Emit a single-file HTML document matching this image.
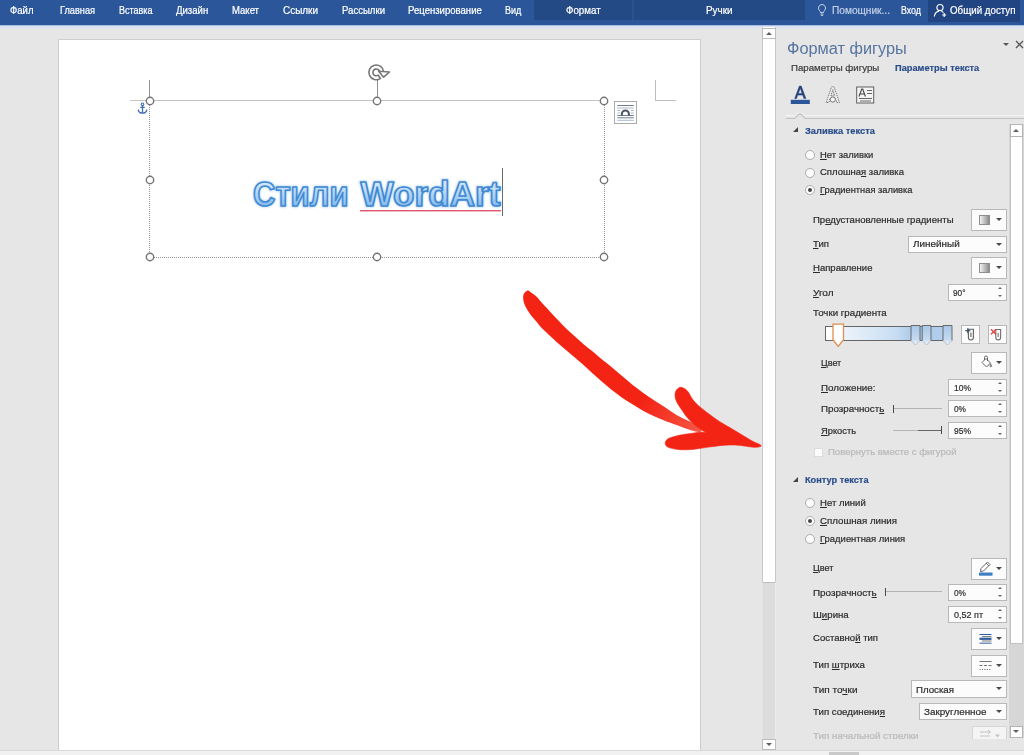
<!DOCTYPE html>
<html lang="ru">
<head>
<meta charset="utf-8">
<title>Формат фигуры</title>
<style>
*{box-sizing:border-box;margin:0;padding:0}
html,body{width:1024px;height:755px;overflow:hidden;background:#e6e6e6}
body{position:relative;font-family:"Liberation Sans",sans-serif;font-size:10.5px;color:#3a3a3a}
div,svg{position:absolute}
.t{white-space:nowrap;line-height:normal;transform-origin:0 0;color:#2b2b2b;-webkit-text-stroke:.2px currentColor}
.t u{text-decoration:underline;text-underline-offset:1px;text-decoration-thickness:1px}
#ribbon{left:0;top:0;width:1024px;height:25px;background:#2b579a}
.dark{top:0;height:20px;background:#244a86}
#page{left:58px;top:39px;width:643px;height:711px;background:#fff;border:1px solid #cdcdcd;border-bottom:none}
.h{width:10px;height:10px;border:1.5px solid #7a7a7a;border-radius:50%;background:#fff}
.btn{left:971px;width:36px;height:22px;background:#fcfcfc;border:1px solid #b8b8b8}
.btn:after,.dd:after{content:"";position:absolute;right:4px;top:8px;border-left:3px solid transparent;border-right:3px solid transparent;border-top:3px solid #4a4a4a}
.dd{height:17px;background:#fcfcfc;border:1px solid #b8b8b8}
.dd:after{top:6px}
.sp{left:948px;width:59px;height:17px;background:#fcfcfc;border:1px solid #b8b8b8}
.sp:before{content:"";position:absolute;right:4px;top:2px;border-left:2px solid transparent;border-right:2px solid transparent;border-bottom:2.5px solid #666}
.sp:after{content:"";position:absolute;right:4px;top:10px;border-left:2px solid transparent;border-right:2px solid transparent;border-top:2.5px solid #666}
.rd{left:805px;width:10px;height:10px;border:1px solid #adadad;border-radius:50%;background:#fdfdfd}
.rd.on:after{content:"";position:absolute;left:2px;top:2px;width:4px;height:4px;border-radius:50%;background:#444}
.tri{left:793px;width:0;height:0;border-left:5.5px solid transparent;border-bottom:5.5px solid #444}
.sl{height:1px;background:#b4b4b4}
.th{width:1px;height:8px;background:#4a4a4a}
</style>
</head>
<body>
<!-- ribbon -->
<div id="ribbon"></div>
<div class="dark" style="left:534px;width:98px"></div>
<div class="dark" style="left:632px;width:2px;background:#2a528f"></div>
<div class="dark" style="left:634px;width:171px"></div>
<div class="dark" style="left:928px;width:92px;height:22px;background:#214482"></div>
<div style="left:0;top:25px;width:1024px;height:7px;background:linear-gradient(#7f9ac4 0,#d6e1f2 14%,#dde6f3 40%,#e4e5e8 60%,#e6e6e6 100%)"></div>
<svg style="left:816px;top:3px" width="12" height="14" viewBox="0 0 12 14"><path d="M6 1.5a3.6 3.6 0 0 0-2.2 6.4c.5.5.7 1 .7 1.700h3c0-.7.2-1.200.7-1.700A3.600 3.600 0 0 0 6 1.500zM4.600 11h2.800M4.900 12.400h2.200" fill="none" stroke="#c3d0e6" stroke-width="1"/></svg>
<svg style="left:933px;top:3px" width="15" height="15" viewBox="0 0 15 15"><circle cx="7" cy="4.600" r="3.100" fill="none" stroke="#fff" stroke-width="1.200"/><path d="M1.300 13.500c.4-3 2.400-4.800 4.700-5.300M8.500 8.300c.8.300 1.500.8 2 1.400M11.200 10v4M9.200 12h4" fill="none" stroke="#fff" stroke-width="1.200"/></svg>

<!-- document -->
<div id="page"></div>
<div style="left:130px;top:99.500px;width:16px;height:1.500px;background:#c6c6c6"></div>
<div style="left:149px;top:80px;width:1px;height:20px;background:#929292"></div>
<div style="left:655px;top:80px;width:1px;height:21px;background:#bdbdbd"></div>
<div style="left:655px;top:100px;width:21px;height:1px;background:#bdbdbd"></div>
<div style="left:149px;top:100px;width:456px;height:158px;border:1px dotted #959595;border-top:1px solid #c4c4c4"></div>
<div style="left:376.500px;top:80px;width:1px;height:17px;background:#8c8c8c"></div>
<svg style="left:143.5px;top:94.7px" width="12" height="12" viewBox="0 0 12 12"><circle cx="6" cy="6" r="3.700" fill="#fff" stroke="#747474" stroke-width="1.400"/></svg><svg style="left:371.0px;top:94.7px" width="12" height="12" viewBox="0 0 12 12"><circle cx="6" cy="6" r="3.700" fill="#fff" stroke="#747474" stroke-width="1.400"/></svg><svg style="left:598.0px;top:94.7px" width="12" height="12" viewBox="0 0 12 12"><circle cx="6" cy="6" r="3.700" fill="#fff" stroke="#747474" stroke-width="1.400"/></svg><svg style="left:143.5px;top:173.5px" width="12" height="12" viewBox="0 0 12 12"><circle cx="6" cy="6" r="3.700" fill="#fff" stroke="#747474" stroke-width="1.400"/></svg><svg style="left:598.0px;top:173.5px" width="12" height="12" viewBox="0 0 12 12"><circle cx="6" cy="6" r="3.700" fill="#fff" stroke="#747474" stroke-width="1.400"/></svg><svg style="left:143.5px;top:251.0px" width="12" height="12" viewBox="0 0 12 12"><circle cx="6" cy="6" r="3.700" fill="#fff" stroke="#747474" stroke-width="1.400"/></svg><svg style="left:371.0px;top:251.0px" width="12" height="12" viewBox="0 0 12 12"><circle cx="6" cy="6" r="3.700" fill="#fff" stroke="#747474" stroke-width="1.400"/></svg><svg style="left:598.0px;top:251.0px" width="12" height="12" viewBox="0 0 12 12"><circle cx="6" cy="6" r="3.700" fill="#fff" stroke="#747474" stroke-width="1.400"/></svg>
<!-- rotate -->
<svg style="left:366px;top:62px" width="26" height="20" viewBox="0 0 26 20"><path d="M14.49 16.46A7.4 7.4 0 1 1 17.65 9.90L13.65 9.90A3.4 3.4 0 1 0 12.20 13.19z" fill="#fff" stroke="#777" stroke-width="1.6" stroke-linejoin="round"/><path d="M12.65 9.20L23.45 10.00L17.65 15.20z" fill="#fff" stroke="#777" stroke-width="1.6" stroke-linejoin="round"/></svg>
<!-- anchor -->
<svg style="left:136.500px;top:101.700px" width="11" height="12.500" viewBox="0 0 12 14"><circle cx="6" cy="2.600" r="1.500" fill="none" stroke="#3f6fb5" stroke-width="1.200"/><path d="M6 4v8M3.500 6h5M1.200 8.500c.3 2.600 2.300 4 4.800 4s4.500-1.400 4.800-4" fill="none" stroke="#3f6fb5" stroke-width="1.500"/></svg>
<!-- layout options -->
<div style="left:614px;top:101px;width:23px;height:23px;background:#fff;border:1px solid #ababab"></div>
<svg style="left:614px;top:101px" width="23" height="23" viewBox="0 0 23 23"><path d="M3.300 4.500h16.500M3.300 14.500h16.500M3.300 16.800h16.500" stroke="#6f7f95" stroke-width="1" fill="none"/><path d="M3.300 7h16.500M3.300 9.500h3M16.800 9.500h3M3.300 12h3M16.800 12h3M3.300 19.300h16.500" stroke="#a9b9cf" stroke-width="1" fill="none"/><path d="M7.900 14.500v-1.600a3.500 3.500 0 0 1 7 0v1.600" fill="none" stroke="#4d5560" stroke-width="2"/></svg>
<!-- wordart -->
<svg style="left:240px;top:160px" width="280" height="66" viewBox="0 0 280 66">
<defs><linearGradient id="wa" x1="0" y1="0" x2="0" y2="1"><stop offset="0.25" stop-color="#cfe6fb"/><stop offset="0.6" stop-color="#a3cdf3"/><stop offset="0.85" stop-color="#7ab3e8"/></linearGradient>
<filter id="wb" x="-5%" y="-20%" width="110%" height="140%"><feGaussianBlur stdDeviation="1.2"/></filter></defs>
<g font-family="Liberation Sans, sans-serif" font-weight="bold" font-size="35.5">
<g filter="url(#wb)" fill="#8ec0ee" stroke="#8ec0ee" stroke-width="2.5" opacity=".7"><text x="13" y="46.400" textLength="95.500" lengthAdjust="spacingAndGlyphs">Стили</text><text x="120.500" y="46.400" textLength="140" lengthAdjust="spacingAndGlyphs">WordArt</text></g>
<g fill="url(#wa)" stroke="#4189d3" stroke-width="1.700" stroke-linejoin="round"><text x="13" y="46.400" textLength="95.500" lengthAdjust="spacingAndGlyphs">Стили</text><text x="120.500" y="46.400" textLength="140" lengthAdjust="spacingAndGlyphs">WordArt</text></g>
</g></svg>
<div style="left:360px;top:210px;width:141px;height:1px;background:#e0566e"></div><div style="left:360px;top:211px;width:141px;height:1px;background:#f3b9c3"></div>
<div style="left:502px;top:168px;width:1px;height:48px;background:#6a6a6a"></div>
<!-- arrow -->
<svg style="left:0;top:0" width="1024" height="755" viewBox="0 0 1024 755"><defs><linearGradient id="ag" gradientUnits="userSpaceOnUse" x1="645" y1="400" x2="700" y2="430"><stop offset="0" stop-color="#f42415"/><stop offset="1" stop-color="#f65746"/></linearGradient></defs><g stroke-width="0.6" stroke-linejoin="round"><path d="M528.0 290.5C529.2 290.3 529.7 291.6 531.0 292.5C532.3 293.4 534.2 294.4 535.9 296.0C537.6 297.6 539.4 300.0 541.2 302.0C543.0 304.0 544.7 305.9 546.5 307.8C548.3 309.7 549.1 310.8 551.8 313.6C554.4 316.4 558.9 321.2 562.4 324.7C565.9 328.2 569.5 331.5 573.0 334.8C576.5 338.1 580.1 341.3 583.6 344.3C587.1 347.3 591.4 350.5 594.2 352.8C597.0 355.1 597.8 355.9 600.6 358.2C603.4 360.5 607.7 363.8 611.2 366.7C614.7 369.6 618.3 372.7 621.8 375.7C625.3 378.7 628.9 381.9 632.4 384.7C635.9 387.5 639.5 390.1 643.0 392.7C646.5 395.3 650.1 397.8 653.6 400.1C657.1 402.5 660.4 404.3 664.2 406.8C668.0 409.3 672.7 412.6 676.5 414.9C680.3 417.1 683.3 418.3 687.2 420.3C691.1 422.3 697.9 425.1 700.0 427.0C702.1 428.9 702.1 431.7 700.0 432.0C697.9 432.3 691.1 430.0 687.2 428.9C683.3 427.8 680.3 426.5 676.5 425.1C672.7 423.7 668.0 422.0 664.2 420.5C660.4 419.0 657.1 417.6 653.6 416.0C650.1 414.4 646.5 412.6 643.0 410.7C639.5 408.8 635.9 406.5 632.4 404.3C628.9 402.1 625.3 399.9 621.8 397.4C618.3 394.9 614.7 392.3 611.2 389.5C607.7 386.7 604.1 383.6 600.6 380.5C597.1 377.4 592.8 373.6 590.0 371.0C587.2 368.4 586.4 367.5 583.6 365.0C580.8 362.5 576.5 359.0 573.0 356.0C569.5 353.0 565.9 350.1 562.4 347.0C558.9 343.9 555.3 340.7 551.8 337.4C548.3 334.1 543.9 330.1 541.2 327.4C538.6 324.7 537.7 323.1 535.9 321.0C534.1 318.9 532.4 317.2 530.6 314.7C528.8 312.2 526.5 308.8 525.3 306.2C524.1 303.6 523.4 300.9 523.2 298.8C523.0 296.7 523.2 294.9 524.0 293.5C524.8 292.1 526.8 290.7 528.0 290.5z" fill="url(#ag)" stroke="none"/><path d="M680.8 387.3C682.6 387.4 685.2 388.7 687.2 390.7C689.2 392.7 690.8 396.9 692.6 399.3C694.4 401.7 695.3 402.8 698.0 405.2C700.7 407.6 705.1 411.1 708.7 413.8C712.3 416.5 715.8 419.1 719.4 421.4C723.0 423.7 726.6 425.7 730.2 427.8C733.8 429.9 737.3 432.1 740.9 434.2C744.5 436.3 748.4 438.8 751.7 440.7C755.0 442.6 761.6 444.9 760.5 445.3C759.4 445.7 750.9 444.2 745.0 443.0C739.1 441.8 731.4 439.7 725.0 438.0C718.6 436.3 711.1 434.4 706.6 432.6C702.1 430.8 700.3 428.9 698.0 427.3C695.7 425.7 694.4 424.6 692.6 423.0C690.8 421.4 689.0 419.8 687.2 417.6C685.4 415.5 683.7 412.8 681.9 410.1C680.1 407.4 677.6 404.0 676.5 401.5C675.4 399.0 675.0 396.9 675.0 395.0C675.0 393.1 675.5 391.3 676.5 390.0C677.5 388.7 679.0 387.2 680.8 387.3z" fill="#f42415" stroke="#f42415"/><path d="M665.2 443.4C665.1 442.1 666.0 440.5 667.0 439.5C668.0 438.5 668.6 438.3 671.1 437.5C673.6 436.7 678.3 435.5 681.9 434.8C685.5 434.1 689.0 433.6 692.6 433.2C696.2 432.8 697.9 432.0 703.3 432.3C708.7 432.6 718.0 433.6 725.0 435.0C732.0 436.4 739.1 439.3 745.0 441.0C750.9 442.7 758.3 444.3 760.5 445.3C762.7 446.3 759.6 446.8 758.1 447.1C756.6 447.4 754.6 447.4 751.7 447.1C748.8 446.8 744.5 445.9 740.9 445.5C737.3 445.1 733.8 445.0 730.2 445.0C726.6 445.0 723.0 445.3 719.4 445.7C715.8 446.1 712.3 446.6 708.7 447.1C705.1 447.6 701.6 448.2 698.0 448.7C694.4 449.1 690.8 449.7 687.2 449.8C683.6 449.9 679.7 449.8 676.5 449.3C673.3 448.9 669.8 448.1 667.9 447.1C666.0 446.1 665.4 444.7 665.2 443.4z" fill="#f42415" stroke="#f42415"/></g></svg>

<!-- doc scrollbar -->
<div style="left:762px;top:27px;width:14px;height:723px;background:#fff;border-left:1px solid #c8c8c8;border-right:1px solid #c8c8c8"></div>
<div style="left:762px;top:28px;width:14px;height:11px;border:1px solid #bcbcbc;background:#fff"></div>
<div style="left:766px;top:32px;width:0;height:0;border-left:3px solid transparent;border-right:3px solid transparent;border-bottom:3px solid #606060"></div>
<div style="left:762px;top:582px;width:14px;height:158px;background:#dcdcdc;border-left:1px solid #e4e4e4;border-right:1px solid #ececec;border-top:1px solid #bdbdbd"></div>
<div style="left:762px;top:739px;width:14px;height:11px;border:1px solid #bcbcbc;background:#fff"></div>
<div style="left:766px;top:743px;width:0;height:0;border-left:3px solid transparent;border-right:3px solid transparent;border-top:3px solid #606060"></div>

<!-- pane chrome -->
<div style="left:1003px;top:43px;width:0;height:0;border-left:3.500px solid transparent;border-right:3.500px solid transparent;border-top:3.500px solid #555"></div>
<svg style="left:1014px;top:39px" width="10" height="10" viewBox="0 0 10 10"><path d="M2 2l7 7M9 2l-7 7" stroke="#555" stroke-width="1.300" fill="none"/></svg>
<!-- tab icons -->
<svg style="left:789px;top:84px" width="22" height="22" viewBox="0 0 22 22"><path d="M5.700 14.500L10.400 2h1.800l4.700 12.500h-2l-1.200-3.400H8.700L7.500 14.500zM9.300 9.400h3.800L11.300 4.200z" fill="#22407c" stroke="#22407c" stroke-width=".5"/><rect x="1.800" y="15.800" width="19" height="4.200" fill="#2b579a"/></svg>
<svg style="left:823px;top:84px" width="20" height="22" viewBox="0 0 20 22"><path d="M3.200 18.500L8.600 2.800h2.400l5.400 15.700h-2.600l-1.300-4.200H7.100l-1.300 4.200zM7.900 11.800h3.800L9.800 5.600z" fill="#f4f4f4" stroke="#777" stroke-width="1" stroke-dasharray="1.500 .8"/><circle cx="9.800" cy="15.500" r="2.600" fill="#f4f4f4" stroke="#777" stroke-width="1"/></svg>
<svg style="left:855px;top:85px" width="20" height="20" viewBox="0 0 20 20"><rect x="1.700" y="2" width="17" height="16" fill="#f4f4f4" stroke="#5e5e5e" stroke-width="1"/><path d="M4 11.500l2.700-7.500h1l2.700 7.500M5 9h4.500" fill="none" stroke="#444" stroke-width="1.100"/><path d="M12 5.500h5M12 8.500h5M4 13.500h13M5 16h11" stroke="#666" stroke-width="1" fill="none"/></svg>
<!-- separator with notch -->
<svg style="left:786px;top:110px" width="238" height="10" viewBox="0 0 238 10"><path d="M0 5.500h9.500l4.500-4 4.500 4H238" fill="none" stroke="#f3f3f3" stroke-width="1"/><path d="M0 8.500h8.500l5.500-5 5.500 5H238" fill="none" stroke="#c2c2c2" stroke-width="1.200"/></svg>

<!-- section 1 -->
<div class="tri" style="top:127px"></div>
<div class="rd" style="top:150px"></div><div class="rd" style="top:167.500px"></div><div class="rd on" style="top:185px"></div>
<div class="btn" style="top:209px"></div>
<div style="left:979px;top:214.500px;width:11px;height:10px;border:1px solid #8f8f8f;background:linear-gradient(90deg,#f4f4f4,#8d8d8d)"></div>
<div class="dd" style="left:908px;top:236px;width:99px"></div>
<div class="btn" style="top:257px"></div>
<div style="left:979px;top:262.500px;width:11px;height:10px;border:1px solid #8f8f8f;background:linear-gradient(90deg,#f4f4f4,#8d8d8d)"></div>
<div class="sp" style="top:284px"></div>
<!-- gradient bar -->
<div style="left:825px;top:326px;width:127px;height:15px;border:1px solid #666;background:linear-gradient(90deg,#fff 0,#fff 7%,#eef4fb 12%,#c9def3 55%,#a9c9ea 70%,#b4d0ed 100%)"></div>
<svg style="left:828px;top:321px" width="128" height="30" viewBox="0 0 128 30"><path d="M5 3.200h10.500v15.500L10.200 25.500 5 18.700z" fill="#fff" stroke="#e08e55" stroke-width="1.300"/><path d="M83 4.500h9v15l-4.500 4.500-4.500-4.500z" fill="url(#gs)" stroke="none"/><path d="M94.200 4.500h8.800v15l-4.400 4.500-4.400-4.500z" fill="url(#gs)"/><path d="M115 4.500h9v15l-4.500 4.500-4.500-4.500z" fill="url(#gs)"/><path d="M83 19.500l4.500 4.500 4.500-4.500M94.200 19.500l4.400 4.500 4.400-4.500M115 19.500l4.500 4.500 4.500-4.500" fill="none" stroke="#aab4c0" stroke-width=".8"/><path d="M83 19.500V4.500h9v15M94.200 19.500V4.500h8.800v15M115 19.500V4.500h9v15" fill="none" stroke="#5e5e5e" stroke-width=".9"/><defs><linearGradient id="gs" x1="0" y1="0" x2="0" y2="1"><stop offset="0" stop-color="#a9c7e8"/><stop offset=".7" stop-color="#c4d9ef"/><stop offset="1" stop-color="#f4f8fc"/></linearGradient></defs></svg>
<div style="left:961px;top:325px;width:19px;height:19px;background:#fcfcfc;border:1px solid #b8b8b8"></div>
<div style="left:988px;top:325px;width:19px;height:19px;background:#fcfcfc;border:1px solid #b8b8b8"></div>
<svg style="left:962px;top:325px" width="18" height="19" viewBox="0 0 18 19"><path d="M6.400 4.200h5v8.300a2.500 2.500 0 0 1-5 0z" fill="#fafafa" stroke="#5f5f5f" stroke-width="1.100"/><path d="M8.900 7.500v4.500" stroke="#7a7a7a" stroke-width="1.300"/><path d="M5.800 3.200v5M3.300 5.700h5" stroke="#44546a" stroke-width="1.300"/></svg>
<svg style="left:988px;top:325px" width="19" height="19" viewBox="0 0 19 19"><path d="M7.800 4.500h4.800v8a2.400 2.400 0 0 1-4.800 0z" fill="#fafafa" stroke="#6f6f6f" stroke-width="1.100"/><path d="M10.200 8v4" stroke="#8a8a8a" stroke-width="1.300"/><path d="M3 4.300l5 5M8 4.300l-5 5" stroke="#e0443a" stroke-width="1.400"/></svg>
<div class="btn" style="top:352px"></div>
<svg style="left:977px;top:354px" width="18" height="17" viewBox="0 0 18 17"><path d="M5 8.500l4-4 4.500 4.500-4 4z" fill="#fff" stroke="#666" stroke-width="1"/><path d="M7.500 6V3.500a1.500 1.500 0 0 1 3 0V7" fill="none" stroke="#666" stroke-width="1"/><path d="M13.500 9c1 1.400 1.500 2.300 1.500 3a1.200 1.200 0 0 1-2.400 0c0-.7.400-1.600.9-3z" fill="#888"/></svg>
<div class="sp" style="top:379px"></div>
<div class="sl" style="left:893px;top:408px;width:49px"></div><div class="th" style="left:893px;top:404.500px"></div>
<div class="sp" style="top:400px"></div>
<div class="sl" style="left:893px;top:430px;width:49px"></div><div class="sl" style="left:918px;top:430px;width:23px;background:#666"></div><div class="th" style="left:940.500px;top:426px"></div>
<div class="sp" style="top:422px"></div>
<div style="left:814px;top:447.500px;width:9px;height:9px;background:#fbfbfb;border:1px solid #dcdcdc"></div>

<!-- section 2 -->
<div class="tri" style="top:476.500px"></div>
<div class="rd" style="top:498px"></div><div class="rd on" style="top:515.500px"></div><div class="rd" style="top:533.500px"></div>
<div class="btn" style="top:558px"></div>
<svg style="left:977px;top:557.500px" width="18" height="20" viewBox="0 0 18 20"><path d="M4 10.500l6.500-6.500 2.500 2.500-6.500 6.500-3 .5z" fill="#fff" stroke="#666" stroke-width="1"/><path d="M9 5l3 3" stroke="#666" stroke-width="1"/><rect x="2" y="14.500" width="13.500" height="3.200" fill="#3f7fc4"/></svg>
<div class="sl" style="left:885px;top:591px;width:57px"></div><div class="th" style="left:884.500px;top:587.500px"></div>
<div class="sp" style="top:584px"></div>
<div class="sp" style="top:606px"></div>
<div class="btn" style="top:628px"></div>
<svg style="left:978px;top:632px" width="16" height="14" viewBox="0 0 16 14"><path d="M1.500 2.500h12" stroke="#2e5f9e" stroke-width="1"/><path d="M1.500 6.800h12" stroke="#2e5f9e" stroke-width="2.200"/><path d="M1.500 11.200h12" stroke="#2e5f9e" stroke-width="1"/><path d="M4 4.600h9.500M4 9h9.500" stroke="#555" stroke-width=".8"/></svg>
<div class="btn" style="top:655px"></div>
<svg style="left:978px;top:659px" width="16" height="14" viewBox="0 0 16 14"><path d="M1.500 2.500h12" stroke="#777" stroke-width="1"/><path d="M1.500 6.500h12" stroke="#777" stroke-width="1" stroke-dasharray="3 1.500"/><path d="M1.500 10.500h12" stroke="#777" stroke-width="1" stroke-dasharray="1.200 1.200"/></svg>
<div class="dd" style="left:911px;top:680px;width:96px;height:18px"></div>
<div class="dd" style="left:919px;top:703px;width:88px"></div>
<div style="left:972px;top:726px;width:35px;height:13px;background:#f4f4f4;border:1px solid #d6d6d6;border-bottom:none"></div>
<svg style="left:978px;top:728px" width="26" height="11" viewBox="0 0 26 11"><path d="M2 4h10M2 8h10M10 2l2.500 2L10 6" stroke="#c4c4c4" stroke-width="1" fill="none"/><path d="M17 6.500l2.500 3 2.500-3z" fill="#c4c4c4"/></svg>

<!-- pane scrollbar -->
<div style="left:1009px;top:124px;width:15px;height:614px;background:#d6d6d6"></div>
<div style="left:1010px;top:124px;width:12.500px;height:520px;background:#fff;border:1px solid #c2c2c2"></div>
<div style="left:1010px;top:124px;width:12.500px;height:12.500px;background:#fff;border:1px solid #b4b4b4"></div>
<div style="left:1013px;top:128.500px;width:0;height:0;border-left:3px solid transparent;border-right:3px solid transparent;border-bottom:3px solid #606060"></div>
<div style="left:1010px;top:725.500px;width:12.500px;height:12px;background:#fff;border:1px solid #b4b4b4"></div>
<div style="left:1013px;top:730px;width:0;height:0;border-left:3px solid transparent;border-right:3px solid transparent;border-top:3px solid #606060"></div>

<div class="t" style="left:9.50px;top:5.0px;font-size:10px;transform:scaleX(0.9555);color:#fff">Файл</div>
<div class="t" style="left:59.50px;top:5.0px;font-size:10px;transform:scaleX(0.9195);color:#fff">Главная</div>
<div class="t" style="left:118.50px;top:5.0px;font-size:10px;transform:scaleX(0.9012);color:#fff">Вставка</div>
<div class="t" style="left:175.70px;top:5.0px;font-size:10px;transform:scaleX(0.9606);color:#fff">Дизайн</div>
<div class="t" style="left:232.00px;top:5.0px;font-size:10px;transform:scaleX(0.9536);color:#fff">Макет</div>
<div class="t" style="left:282.75px;top:5.0px;font-size:10px;transform:scaleX(0.9938);color:#fff">Ссылки</div>
<div class="t" style="left:341.50px;top:5.0px;font-size:10px;transform:scaleX(0.9579);color:#fff">Рассылки</div>
<div class="t" style="left:408.20px;top:5.0px;font-size:10px;transform:scaleX(0.9557);color:#fff">Рецензирование</div>
<div class="t" style="left:505.20px;top:5.0px;font-size:10px;transform:scaleX(0.9009);color:#fff">Вид</div>
<div class="t" style="left:565.50px;top:5.0px;font-size:10px;transform:scaleX(0.9766);color:#fff">Формат</div>
<div class="t" style="left:705.50px;top:5.0px;font-size:10px;transform:scaleX(0.9872);color:#fff">Ручки</div>
<div class="t" style="left:900.60px;top:5.0px;font-size:10px;transform:scaleX(0.8796);color:#fff">Вход</div>
<div class="t" style="left:950.00px;top:5.0px;font-size:10px;transform:scaleX(0.9749);color:#fff">Общий доступ</div>
<div class="t" style="left:831.70px;top:5.0px;font-size:10px;transform:scaleX(1.0134);color:#c3d0e6">Помощник...</div>
<div class="t" style="left:786.75px;top:39.5px;font-size:16px;transform:scaleX(1.0197);color:#58759f;-webkit-text-stroke:0">Формат фигуры</div>
<div class="t" style="left:791.00px;top:62.0px;font-size:9.5px;transform:scaleX(1.0188);color:#3a3a3a">Параметры фигуры</div>
<div class="t" style="left:895.00px;top:62.0px;font-size:9.5px;transform:scaleX(0.9752);color:#2b4f8c;font-weight:bold">Параметры текста</div>
<div class="t" style="left:805.00px;top:125.0px;font-size:9.5px;transform:scaleX(0.9801);color:#2b4f8c;font-weight:bold">Заливка текста</div>
<div class="t" style="left:819.75px;top:148.5px;font-size:9.5px;transform:scaleX(0.9890);"><u>Н</u>ет заливки</div>
<div class="t" style="left:819.75px;top:166.0px;font-size:9.5px;transform:scaleX(0.9991);">Сплошна<u>я</u> заливка</div>
<div class="t" style="left:819.75px;top:184.0px;font-size:9.5px;transform:scaleX(0.9796);"><u>Г</u>радиентная заливка</div>
<div class="t" style="left:813.00px;top:214.0px;font-size:9.5px;transform:scaleX(1.0058);">Пр<u>е</u>дустановленные градиенты</div>
<div class="t" style="left:813.00px;top:238.0px;font-size:9.5px;transform:scaleX(1.0099);"><u>Т</u>ип</div>
<div class="t" style="left:912.50px;top:238.0px;font-size:9.5px;transform:scaleX(1.0443);">Линейный</div>
<div class="t" style="left:813.00px;top:262.0px;font-size:9.5px;transform:scaleX(1.0021);"><u>Н</u>аправление</div>
<div class="t" style="left:813.00px;top:287.0px;font-size:9.5px;transform:scaleX(1.0521);"><u>У</u>гол</div>
<div class="t" style="left:953.00px;top:286.5px;font-size:9.5px;transform:scaleX(0.8696);">90°</div>
<div class="t" style="left:813.00px;top:307.0px;font-size:9.5px;transform:scaleX(1.0223);">Точки градиента</div>
<div class="t" style="left:821.00px;top:357.0px;font-size:9.5px;transform:scaleX(0.9508);"><u>Ц</u>вет</div>
<div class="t" style="left:821.00px;top:382.0px;font-size:9.5px;transform:scaleX(1.0313);"><u>П</u>оложение:</div>
<div class="t" style="left:953.50px;top:381.5px;font-size:9.5px;transform:scaleX(0.8940);">10%</div>
<div class="t" style="left:821.00px;top:403.0px;font-size:9.5px;transform:scaleX(1.0277);">Прозрачност<u>ь</u></div>
<div class="t" style="left:953.50px;top:403.0px;font-size:9.5px;transform:scaleX(0.8737);">0%</div>
<div class="t" style="left:821.00px;top:425.0px;font-size:9.5px;transform:scaleX(0.9786);"><u>Я</u>ркость</div>
<div class="t" style="left:953.50px;top:425.0px;font-size:9.5px;transform:scaleX(0.8940);">95%</div>
<div class="t" style="left:827.50px;top:445.5px;font-size:9.5px;transform:scaleX(1.0060);color:#b9b9b9">Повернуть вместе с фигурой</div>
<div class="t" style="left:805.00px;top:474.0px;font-size:9.5px;transform:scaleX(0.9676);color:#2b4f8c;font-weight:bold">Контур текста</div>
<div class="t" style="left:819.75px;top:497.0px;font-size:9.5px;transform:scaleX(1.0045);"><u>Н</u>ет линий</div>
<div class="t" style="left:819.75px;top:515.0px;font-size:9.5px;transform:scaleX(1.0207);"><u>С</u>плошная линия</div>
<div class="t" style="left:819.75px;top:532.5px;font-size:9.5px;transform:scaleX(0.9936);"><u>Г</u>радиентная линия</div>
<div class="t" style="left:813.00px;top:562.0px;font-size:9.5px;transform:scaleX(0.9626);"><u>Ц</u>вет</div>
<div class="t" style="left:813.00px;top:587.0px;font-size:9.5px;transform:scaleX(1.0358);">Прозрачност<u>ь</u></div>
<div class="t" style="left:953.50px;top:586.5px;font-size:9.5px;transform:scaleX(0.8737);">0%</div>
<div class="t" style="left:813.00px;top:608.5px;font-size:9.5px;transform:scaleX(1.0169);">Ш<u>и</u>рина</div>
<div class="t" style="left:953.50px;top:608.5px;font-size:9.5px;transform:scaleX(0.9469);">0,52 пт</div>
<div class="t" style="left:813.00px;top:632.0px;font-size:9.5px;transform:scaleX(1.0036);">Составно<u>й</u> тип</div>
<div class="t" style="left:813.00px;top:659.0px;font-size:9.5px;transform:scaleX(1.0199);">Тип <u>ш</u>триха</div>
<div class="t" style="left:813.00px;top:684.0px;font-size:9.5px;transform:scaleX(1.0540);">Тип то<u>ч</u>ки</div>
<div class="t" style="left:915.50px;top:684.0px;font-size:9.5px;transform:scaleX(1.0184);">Плоская</div>
<div class="t" style="left:813.00px;top:705.5px;font-size:9.5px;transform:scaleX(1.0172);">Тип соединени<u>я</u></div>
<div class="t" style="left:924.25px;top:705.5px;font-size:9.5px;transform:scaleX(1.0373);">Закругленное</div>
<div class="t" style="left:813.00px;top:730.0px;font-size:9.5px;transform:scaleX(1.0307);color:#b9b9b9">Тип начальной стрелки</div>
<!-- clip below pane -->
<div style="left:776px;top:739px;width:234px;height:11px;background:#e6e6e6"></div>
<!-- status bar -->
<div style="left:0;top:750px;width:1024px;height:5px;background:#f1f1f1;border-top:1px solid #d9d9d9"></div>
<div style="left:829px;top:752px;width:30px;height:3px;background:#c9c9c9"></div>
</body>
</html>
